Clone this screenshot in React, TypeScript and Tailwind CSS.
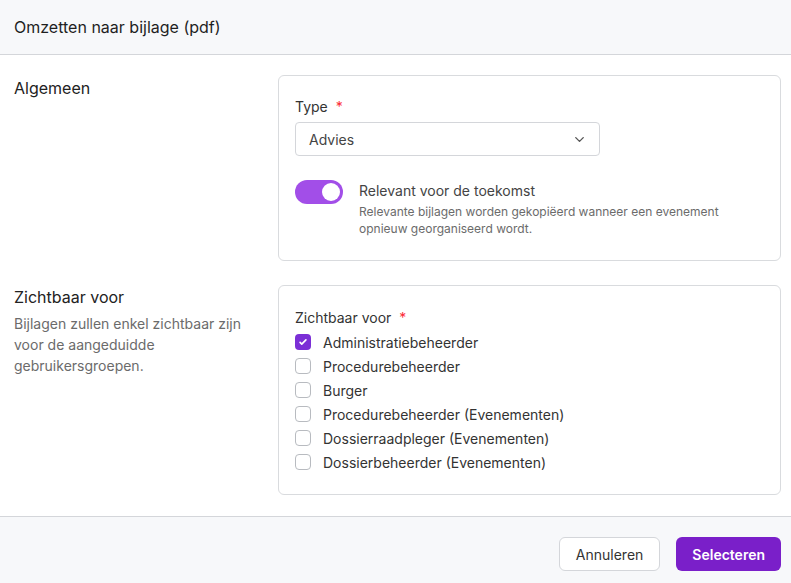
import { useState } from 'react'

const GROEPEN = [
  'Administratiebeheerder',
  'Procedurebeheerder',
  'Burger',
  'Procedurebeheerder (Evenementen)',
  'Dossierraadpleger (Evenementen)',
  'Dossierbeheerder (Evenementen)',
]

export default function App() {
  const [relevant, setRelevant] = useState(true)
  const [gekozen, setGekozen] = useState<string[]>(['Administratiebeheerder'])

  const toggle = (g: string) =>
    setGekozen((l) => (l.includes(g) ? l.filter((x) => x !== g) : [...l, g]))

  return (
    <div className="w-[791px] h-[583px] flex flex-col bg-white text-[#2d2d2d]" style={{ fontFamily: 'Inter, "Noto Sans", sans-serif' }}>
      <div className="h-[55px] shrink-0 bg-[#f7f8fa] border-b border-[#d4d6da] flex items-center px-[14px]">
        <h1 className="text-[16px] text-[#1f1f1f]">Omzetten naar bijlage (pdf)</h1>
      </div>

      <div className="flex-1 px-[14px] pt-[20px] space-y-[24px]">
        <div className="flex">
          <div className="w-[264px] shrink-0 pt-[2px]">
            <h2 className="text-[16px] leading-[22px] text-[#222]">Algemeen</h2>
          </div>
          <div className="flex-1 mr-[-4px] border border-[#d9dbde] rounded-[6px] px-[16px] pt-[21px] pb-[23px]">
            <label className="block text-[14px] leading-[20px] text-[#333] mb-[5px]">
              Type <span className="text-red-500 ml-[4px]">*</span>
            </label>
            <div className="w-[305px] h-[34px] border border-[#d4d6da] rounded-[4px] flex items-center justify-between pl-[13px] pr-[12px] text-[14px] text-[#444]">
              Advies
              <svg width="15" height="15" viewBox="0 0 24 24" fill="none" stroke="#555" strokeWidth="2.2" strokeLinecap="round" strokeLinejoin="round">
                <path d="M6 9l6 6 6-6" />
              </svg>
            </div>
            <div className="flex items-start gap-[16px] mt-[24px]">
              <button onClick={() => setRelevant(!relevant)}
                className={`w-[48px] h-[24px] rounded-full flex items-center px-[3px] shrink-0 ${relevant ? 'bg-[#a24ee8] justify-end' : 'bg-gray-300 justify-start'}`}>
                <span className="w-[18px] h-[18px] rounded-full bg-white" />
              </button>
              <div className="pt-[1px]">
                <div className="text-[14px] leading-[20px] text-[#444]">Relevant voor de toekomst</div>
                <p className="text-[12px] leading-[17px] text-[#6b6b6b] mt-[2px] w-[380px]">
                  Relevante bijlagen worden gekopiëerd wanneer een evenement opnieuw georganiseerd wordt.
                </p>
              </div>
            </div>
          </div>
        </div>

        <div className="flex">
          <div className="w-[264px] shrink-0 pt-[1px]">
            <h2 className="text-[16px] leading-[22px] text-[#222]">Zichtbaar voor</h2>
            <p className="text-[14px] leading-[21px] text-[#6b6b6b] mt-[5px] w-[240px]">
              Bijlagen zullen enkel zichtbaar zijn voor de aangeduidde gebruikersgroepen.
            </p>
          </div>
          <div className="flex-1 mr-[-4px] border border-[#d9dbde] rounded-[6px] px-[16px] pt-[22px] pb-[20px]">
            <label className="block text-[14px] leading-[20px] text-[#333] mb-[2px]">
              Zichtbaar voor <span className="text-red-500 ml-[4px]">*</span>
            </label>
            {GROEPEN.map((g) => {
              const aan = gekozen.includes(g)
              return (
                <label key={g} className="flex items-center gap-[12px] h-[24px] cursor-pointer" onClick={() => toggle(g)}>
                  <span className={`w-[16px] h-[16px] rounded-[4px] flex items-center justify-center shrink-0 ${aan ? 'bg-[#7b2fd6]' : 'border border-[#b8bbc0] bg-white'}`}>
                    {aan && (
                      <svg width="10" height="10" viewBox="0 0 24 24" fill="none" stroke="white" strokeWidth="4" strokeLinecap="round" strokeLinejoin="round">
                        <path d="M5 13l4 4L19 7" />
                      </svg>
                    )}
                  </span>
                  <span className="text-[14px] text-[#333]">{g}</span>
                </label>
              )
            })}
          </div>
        </div>
      </div>

      <div className="h-[67px] shrink-0 bg-[#f7f8fa] border-t border-[#d4d6da] flex items-start justify-end gap-[16px] px-[10px] pt-[20px]">
        <button className="h-[34px] px-[16px] bg-white border border-[#d4d6da] rounded-[6px] text-[14px] text-[#333]">Annuleren</button>
        <button className="h-[34px] px-[16px] bg-[#7a1fc9] rounded-[6px] text-[14px] font-semibold text-white">Selecteren</button>
      </div>
    </div>
  )
}
